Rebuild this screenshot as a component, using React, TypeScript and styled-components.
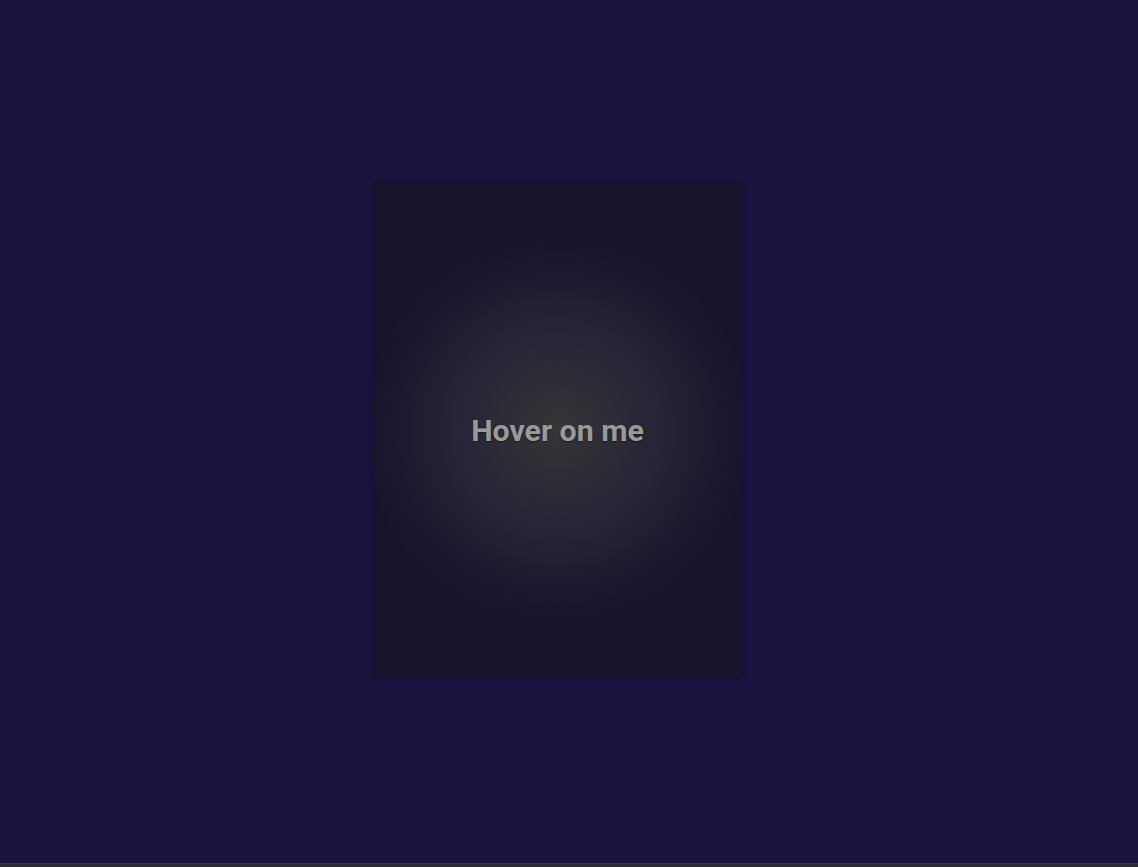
import styled, { createGlobalStyle } from "styled-components";

const GlobalStyle = createGlobalStyle`
  html, body {
    margin: 0;
    padding: 0;
    background: #1b1440;
    font-family: Roboto, "Liberation Sans", sans-serif;
  }
`;

const Page = styled.div`
  width: 1138px;
  height: 867px;
  display: flex;
  flex-direction: column;
  background: #1b1440;
`;

const Stage = styled.main`
  flex: 1;
  display: flex;
  justify-content: center;
  align-items: center;
  padding-right: 23px;
  padding-bottom: 4px;
`;

const Card = styled.div`
  width: 373px;
  height: 496px;
  box-sizing: border-box;
  padding-top: 2px;
  border-radius: 6px;
  background-color: #16132a;
  background-image: radial-gradient(
    circle 198px at 50% 50%,
    rgba(240, 255, 120, 0.145) 0%,
    rgba(225, 240, 170, 0.1) 35%,
    rgba(215, 220, 220, 0.055) 68%,
    rgba(220, 220, 240, 0.018) 88%,
    rgba(255, 255, 255, 0) 100%
  );
  box-shadow: 0 0 3px rgba(10, 6, 30, 0.5);
  display: flex;
  justify-content: center;
  align-items: center;
`;

const Label = styled.span`
  font-family: Roboto, "Liberation Sans", sans-serif;
  font-weight: 700;
  font-size: 30.3px;
  color: #9a9a9a;
  text-shadow: 0 1px 2px rgba(0, 0, 0, 0.45);
`;

const BottomBar = styled.div`
  height: 3px;
  background: #2d2d2d;
  border-top: 1px solid #3a3a3a;
`;

export default function App() {
  return (
    <>
      <GlobalStyle />
      <Page>
        <Stage>
          <Card>
            <Label>Hover on me</Label>
          </Card>
        </Stage>
        <BottomBar />
      </Page>
    </>
  );
}
